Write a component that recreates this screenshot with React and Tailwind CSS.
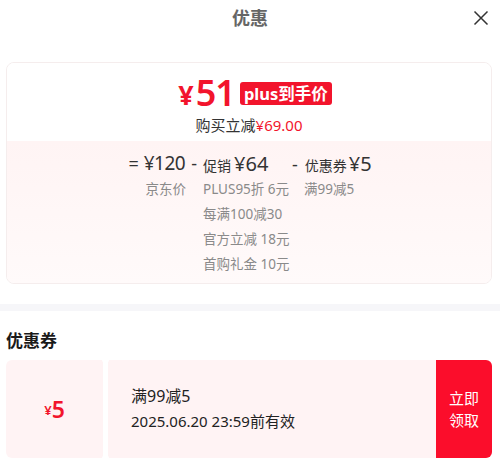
import React from 'react';

const font = { fontFamily: '"Noto Sans", "Noto Sans CJK SC", sans-serif' };

const Breakdown = () => (
  <div className="flex pt-[10px] text-[13.5px] text-[#8a8a8a] leading-[25px] whitespace-nowrap">
    <div className="w-[196px] flex flex-col items-end">
      <div className="flex items-baseline h-[26px] text-[#333]">
        <span className="text-[18px] mr-[5px]">=</span>
        <span className="text-[19px] tracking-[-0.5px]">¥120</span>
        <span className="text-[18px] mx-[6px]">-</span>
      </div>
      <div className="pr-[17px]">京东价</div>
    </div>
    <div className="flex flex-col w-[87px]">
      <div className="flex items-baseline h-[26px] text-[#333]">
        <span className="text-[14px] mr-[3px]">促销</span>
        <span className="text-[20px]">¥64</span>
      </div>
      <div>PLUS95折 6元</div>
      <div>每满100减30</div>
      <div>官方立减 18元</div>
      <div>首购礼金 10元</div>
    </div>
    <div className="flex flex-col">
      <div className="flex items-baseline h-[26px] text-[#333]">
        <span className="text-[18px] ml-[2px] mr-[7px]">-</span>
        <span className="text-[14px] mr-[2px]">优惠券</span>
        <span className="text-[20px]">¥5</span>
      </div>
      <div className="pl-[14px]">满99减5</div>
    </div>
  </div>
);

export default function App() {
  return (
    <div className="w-[500px] h-[463px] bg-white overflow-hidden" style={font}>
      {/* header */}
      <div className="relative h-[36px] flex items-center justify-center">
        <span className="text-[18px] font-bold text-[#666]">优惠</span>
        <svg className="absolute right-[11px] top-[10px]" width="16" height="16" viewBox="0 0 16 16">
          <path d="M1.5 1.5 L14.5 14.5 M14.5 1.5 L1.5 14.5" stroke="#333" strokeWidth="1.5" fill="none" />
        </svg>
      </div>

      {/* price card */}
      <div className="mt-[26px] ml-[6px] mr-[8px] rounded-lg border border-[#f5eded] overflow-hidden">
        <div className="h-[78px] bg-white flex flex-col items-center pt-[13px]">
          <div className="flex items-center h-[34px] ml-[12px]">
            <span className="text-[27px] font-bold text-[#f2142c] mt-[4px] mr-[2px]">¥</span>
            <span className="text-[36px] font-semibold text-[#f2142c] leading-none tracking-[-1px]">51</span>
            <span className="ml-[5px] h-[23px] px-[4px] rounded-[3px] bg-[#f2142c] text-white text-[16.5px] font-bold leading-[23px]">plus到手价</span>
          </div>
          <div className="mt-[5px] text-[15px] text-[#333] leading-[20px]">
            购买立减<span className="text-[#f2142c]">¥69.00</span>
          </div>
        </div>
        <div className="h-[142px] bg-gradient-to-b from-[#fff4f4] to-[#fffafa]">
          <Breakdown />
        </div>
      </div>

      {/* divider band */}
      <div className="mt-[20px] h-[7px] bg-[#f6f6f9]" />

      {/* coupons */}
      <div className="mt-[18px] ml-[6px] text-[17px] font-bold text-[#1a1a1a] leading-[24px]">优惠券</div>
      <div className="mt-[7px] ml-[6px] mr-[8px] h-[98px] flex relative">
        <div className="w-[97px] rounded-l-md bg-[#fff3f4] flex items-center justify-center text-[#f2142c] font-semibold">
          <span className="text-[13px] mt-[4px]">¥</span>
          <span className="text-[23px]">5</span>
        </div>
        <div className="w-[5px] bg-white" />
        <div className="flex-1 bg-[#fff3f4] flex flex-col justify-center pl-[23px] text-[#222] leading-[25px]">
          <div className="text-[16px]">满99减5</div>
          <div className="text-[15px]">2025.06.20 23:59前有效</div>
        </div>
        <div className="w-[56px] rounded-r-md bg-[#fb0d2b] flex flex-col items-center justify-center text-white text-[15px] leading-[22px]">
          <span>立即</span>
          <span>领取</span>
        </div>
        <span className="absolute left-[96px] -top-[4px] w-[7px] h-[7px] rounded-full bg-white" />
        <span className="absolute left-[96px] -bottom-[4px] w-[7px] h-[7px] rounded-full bg-white" />
      </div>
    </div>
  );
}
